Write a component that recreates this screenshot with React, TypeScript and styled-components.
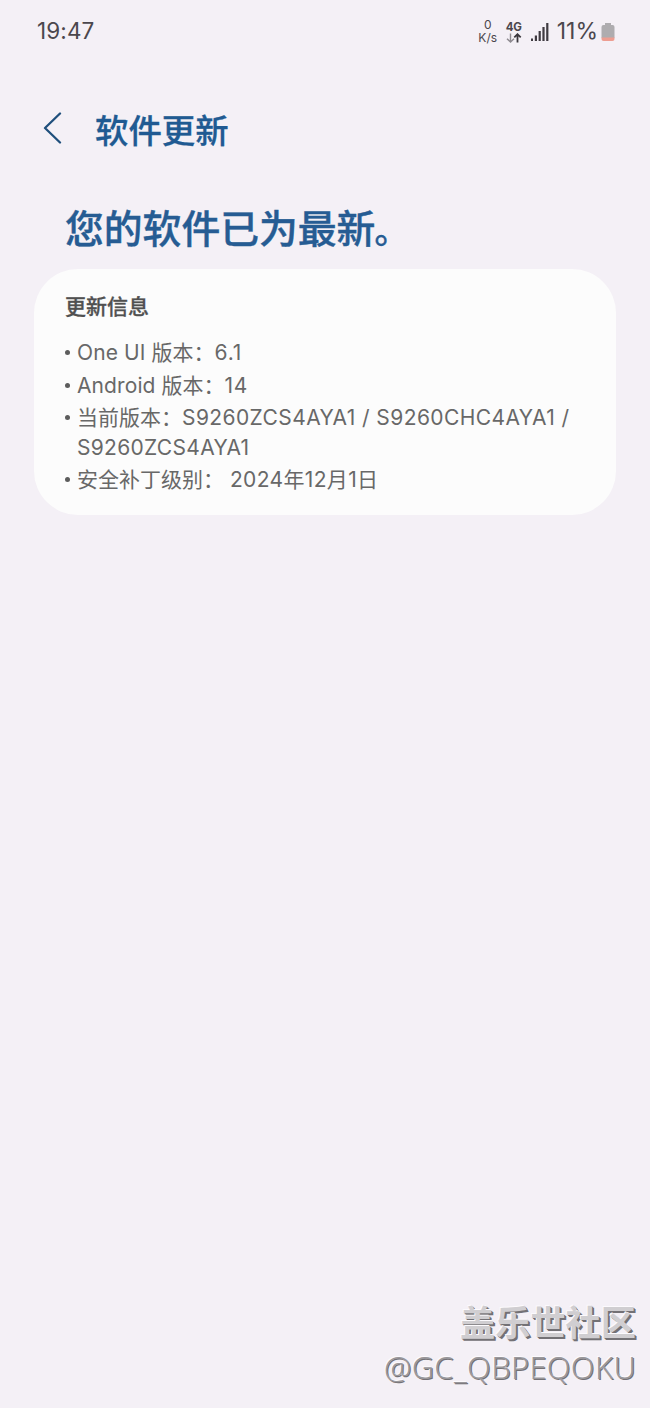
import React from "react";
import styled, { createGlobalStyle } from "styled-components";

const GlobalStyle = createGlobalStyle`
  * { box-sizing: border-box; }
  html, body { margin: 0; background: #f4f0f6; }
  body { font-family: Inter, "Noto Sans CJK SC", sans-serif; }
`;

const Screen = styled.div`
  width: 650px;
  height: 1408px;
  display: flex;
  flex-direction: column;
  background: #f4f0f6;
  overflow: hidden;
`;

const StatusBar = styled.header`
  height: 62px;
  padding: 0 35px 0 37px;
  display: flex;
  align-items: center;
  justify-content: space-between;
  color: #4b474d;
`;

const Clock = styled.span`
  font-size: 22.5px;
  line-height: 30px;
  letter-spacing: 0.1px;
`;

const StatusIcons = styled.div`
  padding-top: 1px;
  display: flex;
  align-items: center;
`;

const NetSpeed = styled.div`
  width: 20px;
  margin-right: 8px;
  padding-bottom: 1px;
  font-size: 12px;
  line-height: 13px;
  text-align: center;
  white-space: nowrap;
`;

const Network = styled.div`
  width: 16px;
  margin-right: 9px;
  display: flex;
  flex-direction: column;
  align-items: center;
  font-size: 11.5px;
  line-height: 12px;
  font-weight: 700;
  letter-spacing: -0.3px;
`;

const BatteryText = styled.span`
  margin: 0 3px 1px 8px;
  font-size: 23px;
  line-height: 30px;
`;

const TitleBar = styled.div`
  height: 138px;
  padding-left: 43px;
  display: flex;
  align-items: center;
`;

const BackIcon = styled.svg`
  margin: -6px 32px 0 0;
`;

const Title = styled.h1`
  margin: 0;
  color: #205a92;
  font-size: 33.4px;
  line-height: 48px;
  font-weight: 500;
  -webkit-text-stroke: 0.3px #205a92;
`;

const Headline = styled.h2`
  height: 69px;
  margin: 0;
  padding: 0 0 0 65px;
  color: #265c93;
  font-size: 38.8px;
  line-height: 58px;
  font-weight: 500;
  -webkit-text-stroke: 0.4px #265c93;
`;

const FullStop = styled.span`
  margin-left: -1px;
  font-size: 34px;
  line-height: 1;
`;

const Card = styled.section`
  height: 246px;
  margin: 0 34px;
  padding: 23px 31px 0;
  border-radius: 44px;
  background: #fcfcfc;
  color: #686868;
`;

const CardTitle = styled.h3`
  margin: 0 0 17px;
  color: #505050;
  font-size: 21px;
  line-height: 29px;
  font-weight: 500;
  -webkit-text-stroke: 0.3px #505050;
`;

const InfoList = styled.ul`
  margin: 0;
  padding: 0;
  list-style: none;
`;

const InfoItem = styled.li`
  margin-bottom: 3px;
  padding-left: 12px;
  position: relative;
  font-size: 21px;
  line-height: 29.5px;
  white-space: nowrap;

  &::before {
    content: "";
    position: absolute;
    left: 0;
    top: 12px;
    width: 5px;
    height: 5px;
    border-radius: 50%;
    background: #5c5c5c;
  }
`;

const Run = styled.span<{ $spacing: number }>`
  letter-spacing: ${(p) => p.$spacing}px;
`;

const Watermark = styled.footer`
  margin-top: auto;
  padding: 0 14px 19px 0;
  display: flex;
  flex-direction: column;
  align-items: flex-end;
`;

const Community = styled.div`
  color: #d0ced1;
  font: 700 35.2px/48px "Noto Sans CJK SC", sans-serif;
  text-shadow: -1px -1px 0 #fcfafd, 1px 1px 0 #737175, 2px 2px 0 #737175;
`;

const Handle = styled.div`
  color: #99979b;
  font: 300 30.9px/44px "Noto Sans", sans-serif;
  letter-spacing: 0.3px;
  text-shadow: -1px -1px 0 #fcfafd, 1px 1px 0 #737175;
`;

export default function App() {
  return (
    <>
      <GlobalStyle />
      <Screen>
        <StatusBar>
          <Clock>19:47</Clock>
          <StatusIcons>
            <NetSpeed>
              <div>0</div>
              <div>K/s</div>
            </NetSpeed>
            <Network>
              <span>4G</span>
              <svg width="16" height="10" viewBox="0 0 16 10" fill="none">
                <path d="M4.5 0.5V9M1 5.7L4.5 9L8 5.7" stroke="#8d898f" strokeWidth="1.4" />
                <path d="M11.5 9.5V1.2M8.3 4.3L11.5 1.2L14.7 4.3" stroke="#3b373d" strokeWidth="1.8" />
              </svg>
            </Network>
            <svg width="18" height="18" viewBox="0 0 18 18" fill="#3f3b41">
              <rect x="0" y="15.5" width="2" height="2.5" />
              <rect x="3.8" y="12.5" width="2.2" height="5.5" />
              <rect x="7.6" y="8" width="2.2" height="10" />
              <rect x="11.4" y="4" width="2.2" height="14" />
              <rect x="15.2" y="0" width="2.2" height="18" />
            </svg>
            <BatteryText>11%</BatteryText>
            <svg width="14" height="20" viewBox="0 0 14 20">
              <path d="M4 1H10V3H11.5Q13.5 3 13.5 5V16H0.5V5Q0.5 3 2.5 3H4Z" fill="#aeacaf" />
              <path d="M0.5 15.5H13.5V17Q13.5 19 11.5 19H2.5Q0.5 19 0.5 17Z" fill="#ed9d91" />
            </svg>
          </StatusIcons>
        </StatusBar>
        <TitleBar>
          <BackIcon width="20" height="32" viewBox="0 0 20 32" fill="none">
            <path d="M17 1.5L2 16L17 30.5" stroke="#1f4f7c" strokeWidth="2.3" strokeLinecap="round" strokeLinejoin="round" />
          </BackIcon>
          <Title>软件更新</Title>
        </TitleBar>
        <Headline>您的软件已为最新<FullStop>。</FullStop></Headline>
        <Card>
          <CardTitle>更新信息</CardTitle>
          <InfoList>
            <InfoItem><Run $spacing={0.1}>One UI </Run>版本：<Run $spacing={0.9}>6.1</Run></InfoItem>
            <InfoItem><Run $spacing={0.1}>Android </Run>版本：<Run $spacing={0.6}>14</Run></InfoItem>
            <InfoItem>
              当前版本：<Run $spacing={0.41}>S9260ZCS4AYA1 / S9260CHC4AYA1 /</Run>
              <br />
              <Run $spacing={0.3}>S9260ZCS4AYA1</Run>
            </InfoItem>
            <InfoItem>安全补丁级别： <Run $spacing={0.35}>2024年12月1日</Run></InfoItem>
          </InfoList>
        </Card>
        <Watermark>
          <Community>盖乐世社区</Community>
          <Handle>@GC_QBPEQOKU</Handle>
        </Watermark>
      </Screen>
    </>
  );
}
